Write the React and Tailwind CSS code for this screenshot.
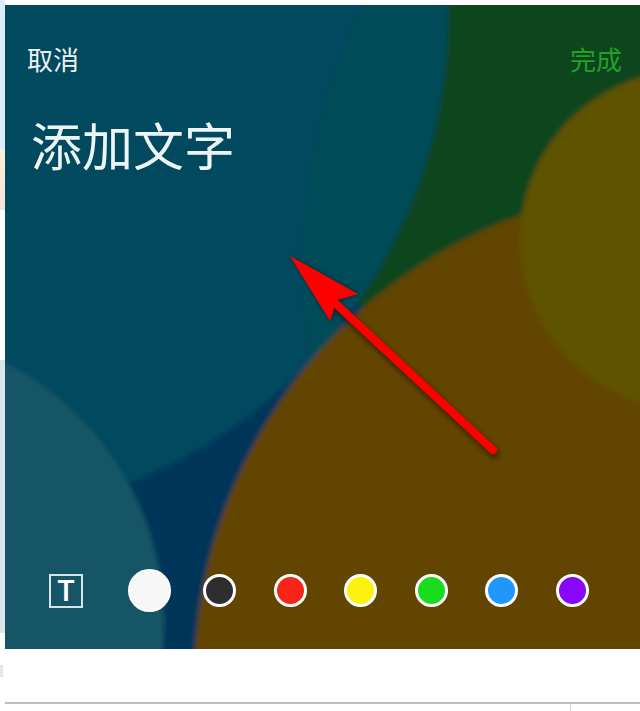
function Wallpaper() {
  return (
    <svg className="absolute inset-0 w-full h-full" viewBox="5 5 635 644" preserveAspectRatio="none" aria-hidden="true">
      <defs>
        <filter id="soft" x="-5%" y="-5%" width="110%" height="110%">
          <feGaussianBlur stdDeviation="2.4" />
        </filter>
        <clipPath id="frame">
          <rect x="5" y="5" width="635" height="644" />
        </clipPath>
        <clipPath id="blue">
          <circle cx="-55" cy="15" r="503" />
        </clipPath>
      </defs>
      <g clipPath="url(#frame)">
        <g filter="url(#soft)">
          <rect x="-20" y="-20" width="700" height="700" fill="#07451a" />
          <polygon points="-20,300 360,300 360,330 200,700 -20,700" fill="#06355a" />
          <circle cx="-55" cy="15" r="503" fill="#014a5e" />
          <g clipPath="url(#blue)">
            <circle cx="903" cy="265" r="600" fill="#024b58" />
          </g>
          <circle cx="-129" cy="623" r="293" fill="#155565" />
          <circle cx="688" cy="680" r="494" fill="#624505" />
          <circle cx="690" cy="240" r="170" fill="#615200" />
        </g>
      </g>
    </svg>
  );
}

function Arrow() {
  return (
    <svg className="absolute left-0 top-0 w-[635px] h-[644px]" viewBox="5 5 635 644" aria-hidden="true">
      <defs>
        <filter id="shade" x="-10%" y="-10%" width="120%" height="120%">
          <feGaussianBlur stdDeviation="2" />
        </filter>
      </defs>
      <g filter="url(#shade)" opacity="0.55" transform="translate(1 1)">
        <path d="M333 303 L493 452" stroke="#1a0f00" strokeWidth="10" strokeLinecap="round" fill="none" />
        <polygon points="290,256 358,293 336,300 330,321" fill="#1a0f00" />
      </g>
      <path d="M335 303 L493 450" stroke="#fe0000" strokeWidth="8" strokeLinecap="round" fill="none" />
      <polygon points="290,256 358,294 337,300 330,321" fill="#fe0000" />
    </svg>
  );
}

function Swatch({ color }) {
  return <div className={`w-[33px] h-[33px] rounded-full border-[3px] border-white shrink-0 ${color}`} />;
}

export default function App() {
  return (
    <div className="flex w-[640px] h-[711px] bg-white overflow-hidden font-['Noto_Sans_CJK_SC','Noto_Sans',sans-serif]">
      <div className="flex flex-col w-[5px] shrink-0">
        <div className="h-[150px] bg-[#dcedfb]" />
        <div className="h-[60px] bg-gradient-to-b from-[#fbf2d6] to-[#fbdfda]" />
        <div className="h-[150px] bg-white" />
        <div className="h-[273px] bg-[#dbe6ec]" />
        <div className="h-[32px] bg-white" />
        <div className="h-[12px] w-[3px] bg-[#e6e6e6]" />
        <div className="flex-1 bg-white" />
      </div>
      <div className="flex flex-col flex-1 min-w-0">
        <div className="h-[5px] bg-white shrink-0" />
        <div className="relative h-[644px] shrink-0 flex flex-col overflow-hidden">
          <Wallpaper />
          <Arrow />
          <div className="relative flex justify-between items-center h-[38px] mt-[35px] pl-[22px] pr-[18px] text-[26px] leading-[38px]">
            <span className="text-[#f0f2f2]">取消</span>
            <span className="text-[#1fa22a]">完成</span>
          </div>
          <div className="relative mt-[36px] pl-[26px] text-[51px] leading-[60px] font-normal text-[#eef3f4]">添加文字</div>
          <div className="relative mt-auto mb-[37px] flex items-center pl-[44px]">
            <div className="w-[34px] h-[34px] border-2 border-[#d5e4e8] flex items-center justify-center shrink-0 font-['Inter',sans-serif] font-semibold text-[28px] leading-none text-white">T</div>
            <div className="ml-[45px] w-[43px] h-[43px] rounded-full bg-[#f7f7f7] border-2 border-white shrink-0" />
            <div className="ml-[32px] flex items-center gap-[37.5px]">
              <Swatch color="bg-[#2e2e30]" />
              <Swatch color="bg-[#fa2318]" />
              <Swatch color="bg-[#fdf20c]" />
              <Swatch color="bg-[#18dc1c]" />
              <Swatch color="bg-[#1f97fd]" />
              <Swatch color="bg-[#8a06f8]" />
            </div>
          </div>
        </div>
        <div className="h-[53px] bg-white shrink-0" />
        <div className="h-[2px] bg-[#b9c1c5] shrink-0" />
        <div className="flex-1 flex justify-end pr-[69px]">
          <div className="w-px bg-[#d0d4d6]" />
        </div>
      </div>
    </div>
  );
}
